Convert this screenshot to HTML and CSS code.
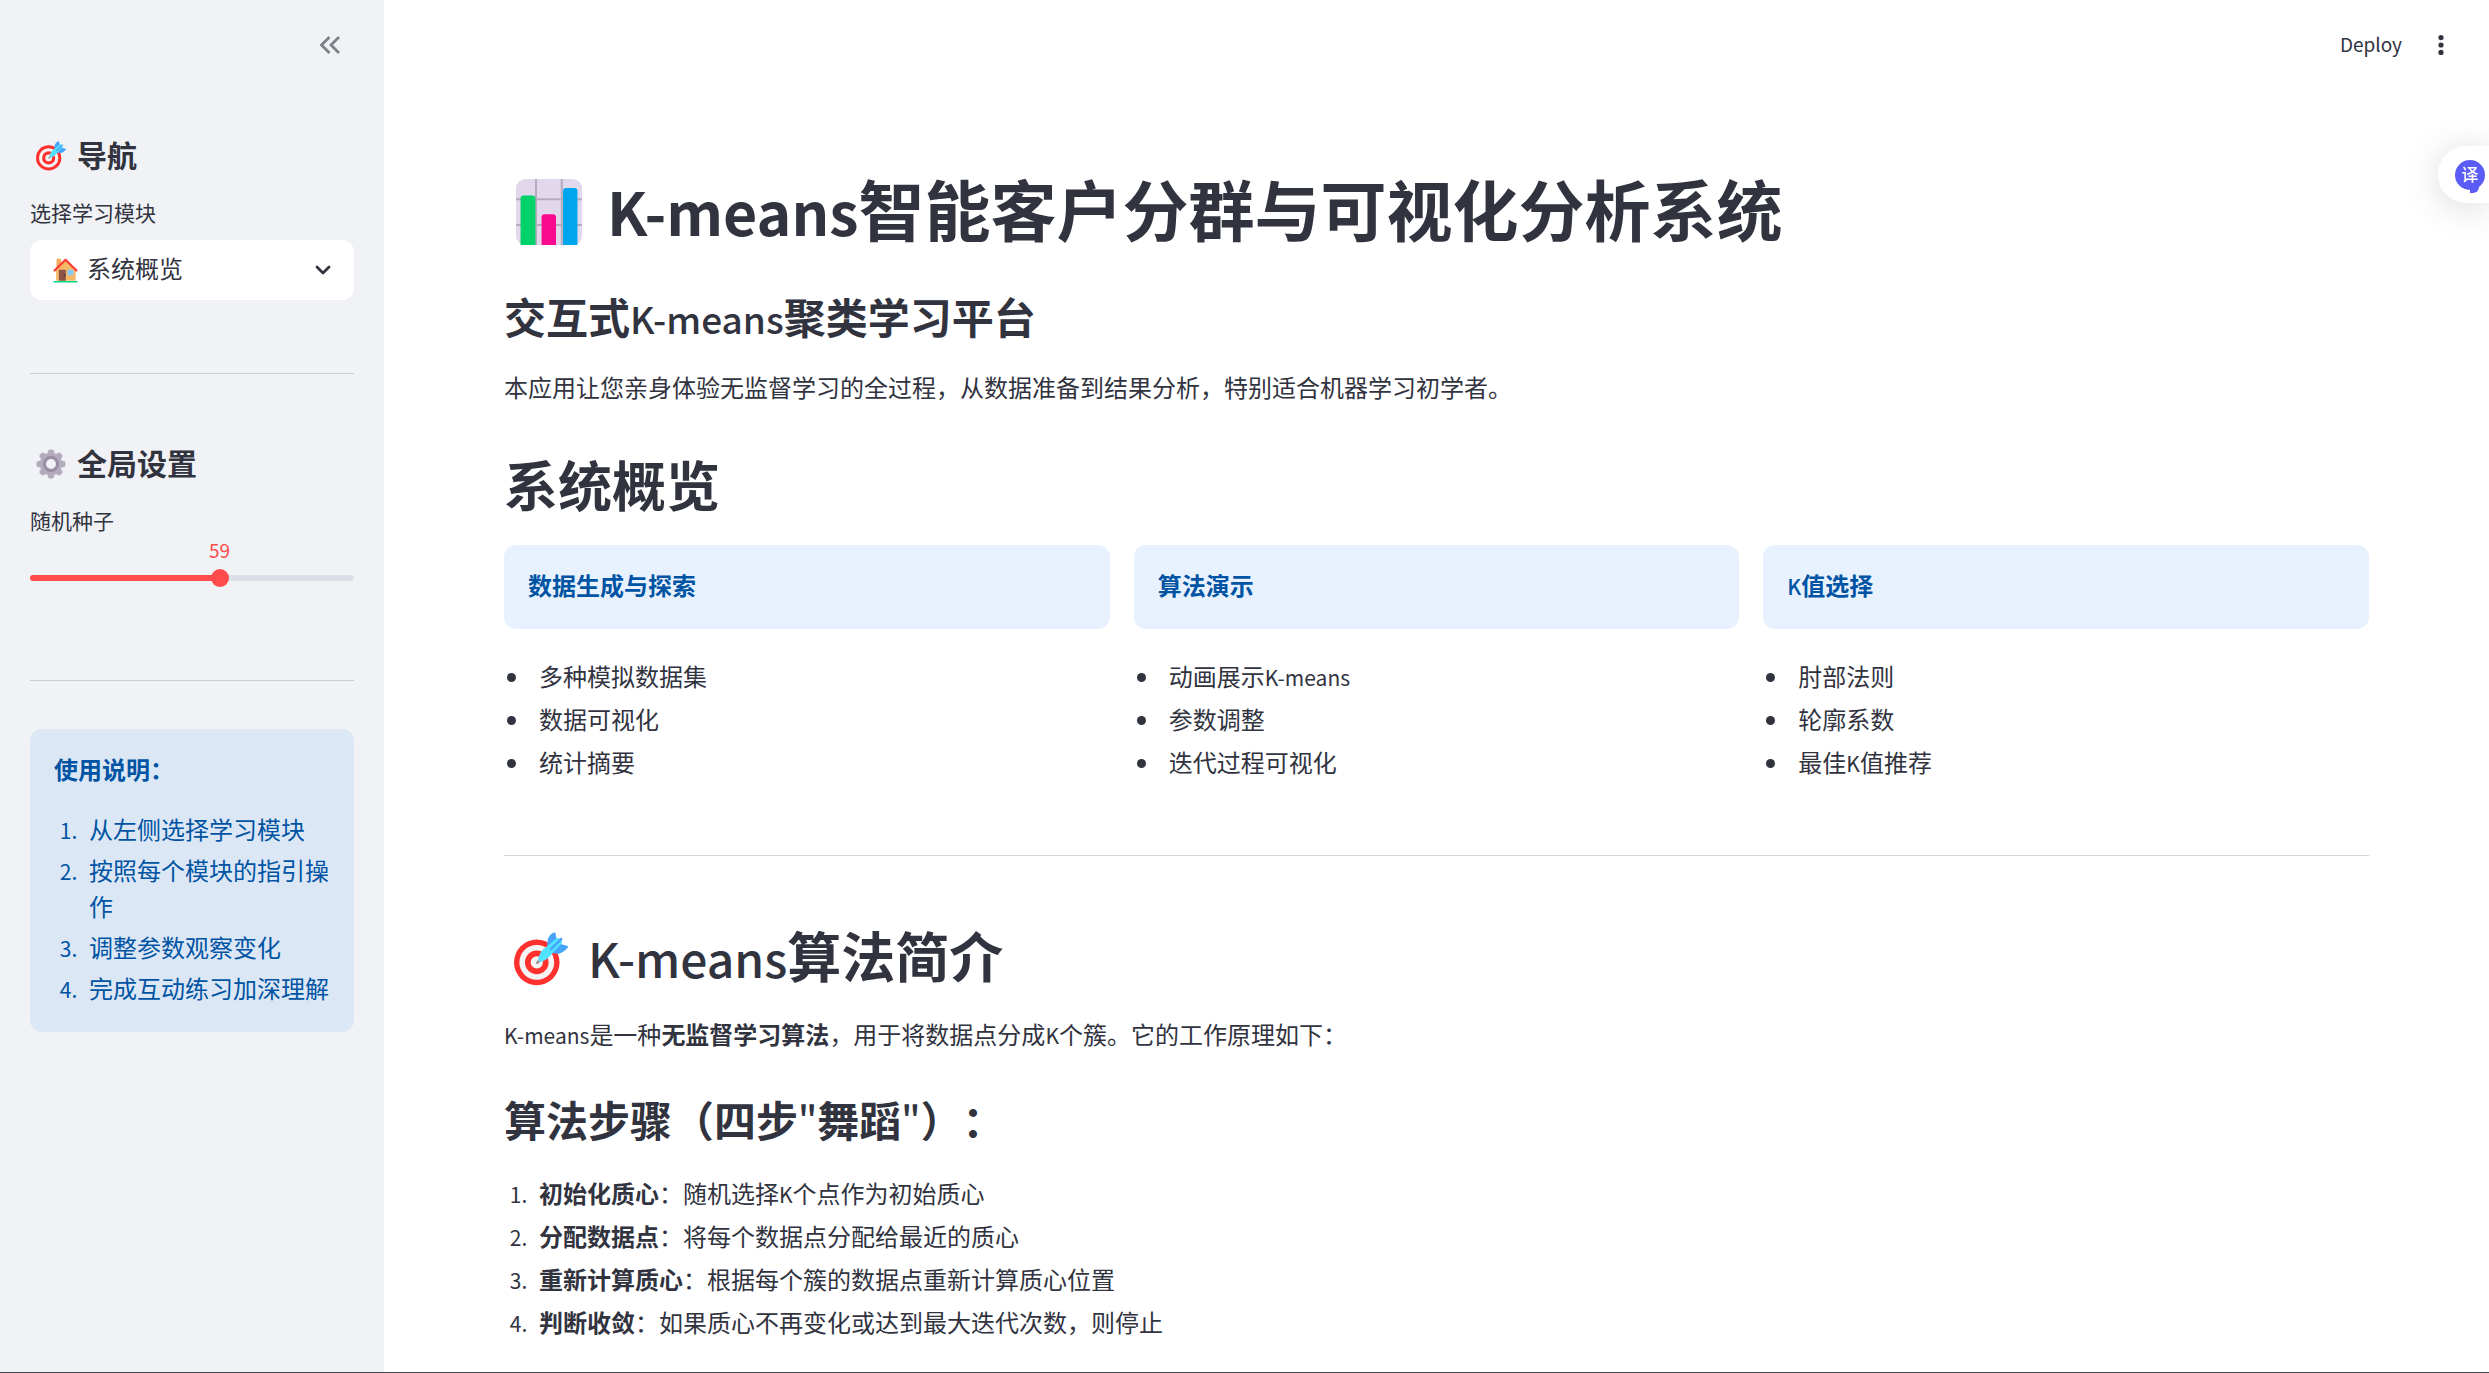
FILE: index.html
```html
<!DOCTYPE html>
<html lang="zh-CN">
<head>
  <meta charset="UTF-8">
  <meta name="viewport" content="width=device-width, initial-scale=1.0">
  <title>K-means智能客户分群与可视化分析系统</title>
  <link rel="stylesheet" href="styles.css">
</head>
<body>
  <svg class="defs" aria-hidden="true">
    <symbol id="icon-target" viewBox="0 0 32 32">
      <circle cx="13.5" cy="18" r="13.5" fill="#ff312f"/>
      <circle cx="13.5" cy="18" r="10.3" fill="#f4f4f4"/>
      <circle cx="13.5" cy="18" r="7" fill="#ff312f"/>
      <circle cx="13.5" cy="18" r="3.6" fill="#f4f4f4"/>
      <path d="M13.8 18.2L19 13" stroke="#9b9b9b" stroke-width="1.6" stroke-linecap="round"/>
      <path d="M19.5 10L20 4.5Q21 1.5 23.500 0.300Q24.500 0 24.700 1L25.500 5.500L22 10z" fill="#46a4fb"/>
      <path d="M22 12.500L27 7L31.500 8.200Q32.500 8.700 31.500 9.700Q29 12.500 26.500 12.900z" fill="#46a4fb"/>
      <path d="M14.500 15.500Q15 12.500 17.500 10L25.500 3.500Q28 3.500 28.500 6.500L21 14.500Q18.500 17.200 16 17.500Q14.300 17.500 14.500 15.500z" fill="#50e2ff"/>
      <path d="M22 10L28 4.200" stroke="#46a4fb" stroke-width="1.500" stroke-linecap="round"/>
    </symbol>
    <symbol id="icon-gear" viewBox="0 0 32 32">
      <g fill="#b4acbc">
        <circle cx="16" cy="16" r="12"/>
        <rect x="12.500" y="0.500" width="7" height="31" rx="3"/>
        <rect x="12.500" y="0.500" width="7" height="31" rx="3" transform="rotate(45 16 16)"/>
        <rect x="12.500" y="0.500" width="7" height="31" rx="3" transform="rotate(90 16 16)"/>
        <rect x="12.500" y="0.500" width="7" height="31" rx="3" transform="rotate(135 16 16)"/>
      </g>
      <circle cx="16" cy="16" r="7" fill="#f0f2f6" stroke="#998ea4" stroke-width="3.400"/>
    </symbol>
    <symbol id="icon-home" viewBox="0 0 32 32">
      <rect x="4.500" y="1" width="6" height="14" rx="1" fill="#f3ad61"/>
      <path d="M16 2.500L29 15.500V29H4V15.500z" fill="#f5b866"/>
      <rect x="7.500" y="15" width="9" height="14" rx="1" fill="#8c5543"/>
      <circle cx="14.500" cy="22" r="1" fill="#321b41"/>
      <rect x="18.500" y="15" width="7.500" height="7" rx="1" fill="#83cbff"/>
      <path d="M2 16L16 2.200L30 16" fill="none" stroke="#ff3a35" stroke-width="2.800" stroke-linecap="round" stroke-linejoin="round"/>
      <path d="M1.500 30.500H30.500" stroke="#00d98a" stroke-width="2" stroke-linecap="round"/>
    </symbol>
    <symbol id="icon-chart" viewBox="0 0 32 32">
      <rect width="32" height="32" rx="4.500" fill="#e1d8ec"/>
      <path d="M9.700 0V32M22.200 0V32M0 9.800H32M0 22.300H32" stroke="#b4acbc" stroke-width="1"/>
      <path d="M2.200 32V9.500Q2.200 8 3.700 8H7.900Q9.400 8 9.400 9.500V32z" fill="#00d26a"/>
      <path d="M12.400 32V18.600Q12.400 17.100 13.900 17.100H17.900Q19.400 17.100 19.400 18.600V32z" fill="#f70a8d"/>
      <path d="M22.800 32V5.900Q22.800 4.400 24.300 4.400H28.300Q29.800 4.400 29.800 5.900V32z" fill="#00a6ed"/>
    </symbol>
  </svg>

  <aside class="sidebar">
    <div class="sidebar-header">
      <button class="icon-btn" type="button" aria-label="收起侧边栏">
        <svg width="20" height="18" viewBox="0 0 20 18" fill="none" stroke="#7f818a" stroke-width="2.800"><path d="M9.500 1L1.500 9L9.500 17M19 1L11 9L19 17"/></svg>
      </button>
    </div>

    <h2 class="side-title"><svg class="emoji"><use href="#icon-target"/></svg>导航</h2>
    <label class="field-label" for="module">选择学习模块</label>
    <div class="select-box">
      <svg class="home"><use href="#icon-home"/></svg>
      <select id="module">
        <option>系统概览</option>
        <option>数据生成与探索</option>
        <option>算法演示</option>
        <option>K值选择</option>
      </select>
      <svg class="arrow" width="16" height="10" viewBox="0 0 16 10" fill="none" stroke="#31333f" stroke-width="2.800" stroke-linecap="round" stroke-linejoin="round"><path d="M2 2L8 8L14 2"/></svg>
    </div>

    <hr>

    <h2 class="side-title"><svg class="emoji"><use href="#icon-gear"/></svg>全局设置</h2>
    <label class="field-label" for="seed">随机种子</label>
    <div class="slider" style="--value: 59">
      <output id="seedValue" for="seed">59</output>
      <input type="range" id="seed" min="0" max="100" value="59">
    </div>

    <hr>

    <div class="info">
      <p><strong>使用说明：</strong></p>
      <ol>
        <li>从左侧选择学习模块</li>
        <li>按照每个模块的指引操作</li>
        <li>调整参数观察变化</li>
        <li>完成互动练习加深理解</li>
      </ol>
    </div>
  </aside>

  <div class="page">
    <header class="toolbar">
      <button class="deploy" type="button">Deploy</button>
      <button class="icon-btn" type="button" aria-label="菜单">
        <svg width="6" height="20" viewBox="0 0 6 20" fill="#31333f"><circle cx="3" cy="2.600" r="2.600"/><circle cx="3" cy="10" r="2.600"/><circle cx="3" cy="17.400" r="2.600"/></svg>
      </button>
    </header>

    <main>
      <h1><svg class="emoji"><use href="#icon-chart"/></svg><span class="en">K-means</span>智能客户分群与可视化分析系统</h1>
      <h3>交互式<span class="en">K-means</span>聚类学习平台</h3>
      <p>本应用让您亲身体验无监督学习的全过程，从数据准备到结果分析，特别适合机器学习初学者。</p>

      <h2>系统概览</h2>
      <div class="columns">
        <section>
          <div class="info"><strong>数据生成与探索</strong></div>
          <ul>
            <li>多种模拟数据集</li>
            <li>数据可视化</li>
            <li>统计摘要</li>
          </ul>
        </section>
        <section>
          <div class="info"><strong>算法演示</strong></div>
          <ul>
            <li>动画展示<span class="en">K-means</span></li>
            <li>参数调整</li>
            <li>迭代过程可视化</li>
          </ul>
        </section>
        <section>
          <div class="info"><strong><span class="en">K</span>值选择</strong></div>
          <ul>
            <li>肘部法则</li>
            <li>轮廓系数</li>
            <li>最佳<span class="en">K</span>值推荐</li>
          </ul>
        </section>
      </div>

      <hr>

      <h2><svg class="emoji"><use href="#icon-target"/></svg><span class="en">K-means</span>算法简介</h2>
      <p><span class="en">K-means</span>是一种<strong>无监督学习算法</strong>，用于将数据点分成<span class="en">K</span>个簇。它的工作原理如下：</p>

      <h3>算法步骤（四步<span class="en">"</span>舞蹈<span class="en">"</span>）：</h3>
      <ol>
        <li><strong>初始化质心</strong>：随机选择<span class="en">K</span>个点作为初始质心</li>
        <li><strong>分配数据点</strong>：将每个数据点分配给最近的质心</li>
        <li><strong>重新计算质心</strong>：根据每个簇的数据点重新计算质心位置</li>
        <li><strong>判断收敛</strong>：如果质心不再变化或达到最大迭代次数，则停止</li>
      </ol>
    </main>
  </div>

  <button class="translate" type="button" aria-label="翻译">
    <span class="badge">译</span>
  </button>

  <script>
    const seed = document.getElementById('seed');
    seed.addEventListener('input', function () {
      document.getElementById('seedValue').innerText = this.value;
      this.parentElement.style.setProperty('--value', this.value);
    });
  </script>
</body>
</html>
```
FILE: styles.css
```css
* { box-sizing: border-box; }
body {
  margin: 0;
  display: flex;
  min-height: 100vh;
  font-family: "Noto Sans CJK SC", sans-serif;
  font-size: 24px;
  line-height: 38px;
  text-spacing-trim: space-all;
  color: #31333f;
  background: #fff;
  border-bottom: 1px solid #41464f;
}
h1, h2, h3, p, ul, ol { margin: 0; padding: 0; }
button, select { font: inherit; color: inherit; border: 0; background: none; padding: 0; }
hr { width: 100%; height: 1px; border: 0; background: #d6d6d9; }
.defs { position: absolute; width: 0; height: 0; }
.icon-btn { display: flex; cursor: pointer; }
.en { font-size: 21px; line-height: 1; }

/* sidebar */
.sidebar { width: 384px; flex-shrink: 0; padding: 0 30px; background: #f0f2f6; }
.sidebar-header { height: 90px; display: flex; align-items: center; justify-content: flex-end; padding-right: 14px; }
.side-title { display: flex; align-items: center; font-size: 30px; line-height: 36px; margin-top: 46px; }
.side-title .emoji { width: 30px; height: 30px; margin: 4px 11px 0 6px; }
.field-label { display: block; font-size: 21px; line-height: 32px; margin-top: 24px; }
.select-box { position: relative; display: flex; align-items: center; height: 60px; margin-top: 12px; padding-left: 23px; background: #fff; border-radius: 12px; }
.select-box select { flex: 1; height: 60px; padding: 0 0 4px 9px; appearance: none; outline: none; }
.home { width: 25px; height: 25px; }
.arrow { position: absolute; right: 23px; pointer-events: none; }
.sidebar hr { background: #cbccd2; margin: 73px 0 48px; }
.sidebar hr + .side-title { margin-top: 70px; }
.slider { padding: 1px 0 20px; }
.slider output { display: block; width: 36px; margin-left: calc(9px + (100% - 18px) * var(--value) / 100 - 18px); text-align: center; font-size: 19px; line-height: 26px; color: #ff4b4b; }
.slider input { display: block; width: 100%; height: 18px; margin: 6px 0 0; appearance: none; background: none; }
.slider input::-webkit-slider-runnable-track { height: 6px; border-radius: 3px; background: linear-gradient(to right, #ff4b4b calc(var(--value) * 1%), #dadfe9 calc(var(--value) * 1%)); }
.slider input::-webkit-slider-thumb { appearance: none; width: 18px; height: 18px; margin-top: -6px; border-radius: 50%; background: #ff4b4b; }

/* info boxes */
.info { padding: 22px 24px 26px; border-radius: 12px; line-height: 36px; color: #0054a3; background: #e8f2ff; }
.sidebar .info { background: #dce7f6; }
.sidebar .info p { margin-bottom: 24px; }

/* lists */
li { margin-left: 28px; padding-left: 7px; }
li + li { margin-top: 5px; }
ol li::marker { font-size: 21px; }

/* main */
.page { flex: 1; min-width: 0; }
.toolbar { height: 90px; display: flex; align-items: center; justify-content: flex-end; padding-right: 45px; }
.deploy { font-size: 19px; margin-right: 36px; padding-bottom: 3px; cursor: pointer; }
main { padding: 78px 120px 24px; }
h1 { font-size: 66px; line-height: 79px; }
h1 .en { font-size: 59px; }
h1 .emoji { width: 66px; height: 66px; margin: 0 25px 0 12px; vertical-align: -9px; }
main h2 { font-size: 54px; line-height: 65px; }
main h2 .emoji { width: 54px; height: 54px; margin: 0 20px 0 10px; vertical-align: -8px; }
h3 { font-size: 42px; line-height: 50px; }
h2 .en { font-size: 48px; }
h3 .en { font-size: 37px; }
h2 .en, h3 .en, strong .en { font-weight: 500; }
h1 + h3 { margin-top: 44px; }
h3 + p { margin-top: 27px; }
p + h2 { margin-top: 45px; }
h2 + p { margin-top: 28px; }
p + h3 { margin-top: 41px; }
h3 + ol { margin-top: 30px; }
.columns { display: grid; grid-template-columns: repeat(3, 1fr); gap: 24px; margin-top: 29px; }
.columns ul { margin-top: 28px; }
main hr { margin: 74px 0 66px; }

/* floating translate button */
.translate { position: fixed; top: 146px; right: 0; width: 51px; height: 57px; padding-left: 17px; border-radius: 28px 0 0 28px; background: #fff; box-shadow: 0 4px 36px rgba(0, 0, 0, 0.15); cursor: pointer; }
.badge { position: relative; display: block; width: 30px; height: 30px; border-radius: 50%; background: #5b5cf6; color: #fff; font-size: 17px; font-weight: 500; line-height: 28px; text-align: center; }
.badge::after { content: ""; position: absolute; left: 15px; bottom: -3px; width: 9px; height: 6px; border-radius: 0 0 9px 0; background: #5b5cf6; }
```
